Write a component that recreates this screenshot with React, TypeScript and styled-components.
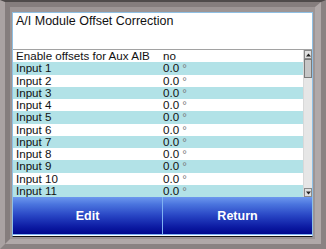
import React from "react";
import styled, { createGlobalStyle } from "styled-components";

const Global = createGlobalStyle`
  html, body { margin: 0; padding: 0; background: #9d9595; }
  * { box-sizing: border-box; }
`;

const Frame = styled.div`
  width: 326px;
  height: 249px;
  background: #9d9595;
  border-top: 2px solid #4f4a4a;
  border-left: 5px solid #aaa2a2;
  border-right: 5px solid #8a8282;
  border-bottom: 5px solid #8a8282;
  display: flex;
`;

const Bevel = styled.div`
  flex: 1;
  display: flex;
  border-top: 5px solid #857d7d;
  border-left: 5px solid #857d7d;
  border-right: 6px solid #b0a8a8;
  border-bottom: 5px solid #b0a8a8;
  padding: 5px 2px 2px 2px;
`;

const Panel = styled.div`
  flex: 1;
  display: flex;
  flex-direction: column;
  background: #ffffff;
  border: 1px solid #8fc0e4;
  border-bottom: 1px solid #151515;
  font-family: "Liberation Sans", Arial, sans-serif;
`;

const Title = styled.div`
  height: 37px;
  padding: 1px 3px;
  font-size: 12.5px;
  color: #111;
  border-bottom: 1px solid #a2a2a2;
`;

const ListArea = styled.div`
  height: 147px;
  display: flex;
`;

const Rows = styled.div`
  flex: 1;
  display: flex;
  flex-direction: column;
`;

const Row = styled.div<{ $alt: boolean }>`
  height: 12.25px;
  display: flex;
  align-items: center;
  overflow: hidden;
  background: ${(p) => (p.$alt ? "#b2e2e7" : "#ffffff")};
  font-size: 11.6px;
  color: #111;
  line-height: 12px;
`;

const Label = styled.div`
  width: 150px;
  padding-left: 3px;
  white-space: nowrap;
`;

const Value = styled.div`
  flex: 1;
  white-space: nowrap;
`;

const Deg = styled.span`
  color: #7a7a7a;
`;

const Scroll = styled.div`
  width: 9px;
  display: flex;
  flex-direction: column;
  background: #e6e6e6;
  border-left: 1px solid #d8d8d8;
`;

const Arrow = styled.div`
  height: 9px;
  background: #e0e0e0;
  border: 1px solid #8a8a8a;
  display: flex;
  align-items: center;
  justify-content: center;
`;

const Thumb = styled.div`
  height: 19px;
  background: #c6c6c6;
  border: 1px solid #7a7a7a;
`;

const Track = styled.div`
  flex: 1;
`;

const Buttons = styled.div`
  height: 38px;
  display: flex;
  gap: 1px;
  background: #7fb2f2;
`;

const Button = styled.div`
  flex: 1;
  display: flex;
  align-items: center;
  justify-content: center;
  color: #ffffff;
  font-weight: bold;
  font-size: 12.5px;
  background: linear-gradient(
    to bottom,
    #6d98ee 0%,
    #4a74de 20%,
    #2845c4 50%,
    #0d1ca4 80%,
    #00078c 100%
  );
  border-bottom: 1px solid #7fb2f2;
`;

const rows: [string, string, boolean][] = [
  ["Enable offsets for Aux AIB", "no", false],
  ...Array.from({ length: 11 }, (_, i) => [`Input ${i + 1}`, "0.0", true] as [string, string, boolean]),
];

const UpTri = () => (
  <svg width="5" height="4" viewBox="0 0 5 4">
    <path d="M0 3.5 L2.5 0.5 L5 3.5 Z" fill="#222" />
  </svg>
);
const DownTri = () => (
  <svg width="5" height="4" viewBox="0 0 5 4">
    <path d="M0 0.5 L2.5 3.5 L5 0.5 Z" fill="#222" />
  </svg>
);

export default function App() {
  return (
    <>
      <Global />
      <Frame>
        <Bevel>
          <Panel>
            <Title>A/I Module Offset Correction</Title>
            <ListArea>
              <Rows>
                {rows.map(([l, v, deg], i) => (
                  <Row key={i} $alt={i % 2 === 1}>
                    <Label>{l}</Label>
                    <Value>
                      {v}
                      {deg && <Deg> °</Deg>}
                    </Value>
                  </Row>
                ))}
              </Rows>
              <Scroll>
                <Arrow>
                  <UpTri />
                </Arrow>
                <Thumb />
                <Track />
                <Arrow>
                  <DownTri />
                </Arrow>
              </Scroll>
            </ListArea>
            <Buttons>
              <Button>Edit</Button>
              <Button>Return</Button>
            </Buttons>
          </Panel>
        </Bevel>
      </Frame>
    </>
  );
}
